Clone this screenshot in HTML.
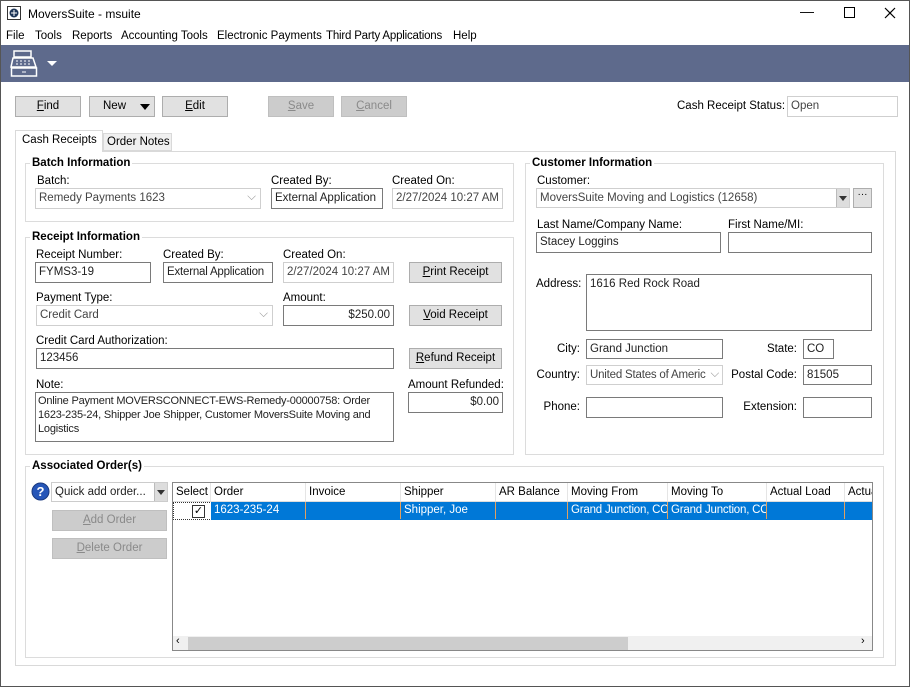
<!DOCTYPE html>
<html><head><meta charset="utf-8"><style>
*{box-sizing:border-box;margin:0;padding:0}
body{width:910px;height:687px;background:#fff;font-family:"Liberation Sans",sans-serif;font-size:11.5px;color:#000;position:relative;overflow:hidden}
.a{position:absolute;white-space:nowrap}
.i{position:absolute;border:1px solid #7a7a7a;background:#fff;padding:2px 3px;line-height:14px;white-space:nowrap;overflow:hidden;color:#222}
.ro{border-color:#cfcfcf;color:#444}
.b{position:absolute;background:#e1e1e1;border:1px solid #adadad;text-align:center;line-height:19px}
.dis{color:#8a8a8a;background:#cccccc;border-color:#bfbfbf}
.g{position:absolute;border:1px solid #dcdcdc}
.gt{position:absolute;background:#fff;font-weight:bold;padding:0 2px;line-height:12px}
.r{text-align:right}
.h{position:absolute;top:0;height:18px;border-right:1px solid #e5e5e5;padding-left:3px;line-height:18px}
.c{position:absolute;top:0;height:17px;border-right:1px solid #e0a060;padding-left:3px;line-height:17px;color:#fff}
u{text-decoration:underline}
</style></head><body>
<div style="position:absolute;left:0;top:0;width:910px;height:687px;border:1px solid #555"></div>
<svg class="a" style="left:7px;top:6px" width="14" height="14"><rect x="0.5" y="0.5" width="13" height="13" fill="#fff" stroke="#333"/><circle cx="7" cy="7" r="4.5" fill="#1d3557"/><path d="M4 7h6M7 4v6" stroke="#fff" stroke-width="1"/></svg>
<div class="a" style="left:28px;top:7px;font-size:12px">MoversSuite - msuite</div>
<div class="a" style="left:800px;top:3px;font-size:14px">—</div>
<div class="a" style="left:844px;top:7px;width:11px;height:11px;border:1px solid #000"></div>
<svg class="a" style="left:884px;top:7px" width="12" height="12"><path d="M1 1L11 11M11 1L1 11" stroke="#000" stroke-width="1.2"/></svg>
<div class="a" style="top:30px;left:6px">File</div>
<div class="a" style="top:30px;left:35px">Tools</div>
<div class="a" style="top:30px;left:72px">Reports</div>
<div class="a" style="top:30px;left:121px">Accounting Tools</div>
<div class="a" style="top:30px;left:217px">Electronic Payments</div>
<div class="a" style="top:30px;left:326px;letter-spacing:-0.2px">Third Party Applications</div>
<div class="a" style="top:30px;left:453px">Help</div>
<div class="a" style="left:1px;top:45px;width:908px;height:37px;background:#5e6a8c"></div>
<svg class="a" style="left:10px;top:49px" width="52" height="30"><rect x="4" y="2" width="17" height="6" fill="none" stroke="#fff" stroke-width="1.5"/><path d="M3 9h20l3 9H1z" fill="none" stroke="#fff" stroke-width="1.5"/><rect x="1.5" y="19" width="25" height="8" fill="none" stroke="#fff" stroke-width="1.5"/><path d="M6 12h2M10 12h2M14 12h2M18 12h2M6 15h2M10 15h2M14 15h2M18 15h2" stroke="#fff"/><path d="M12 23h4" stroke="#fff"/><path d="M37 12h10l-5 5z" fill="#fff"/></svg>
<div class="b" style="left:15px;top:96px;width:66px;height:21px"><u>F</u>ind</div>
<div class="b" style="left:89px;top:96px;width:66px;height:21px;text-align:left;padding-left:13px">New<span style="position:absolute;left:50px;top:7px;border-left:5px solid transparent;border-right:5px solid transparent;border-top:6px solid #000"></span></div>
<div class="b" style="left:162px;top:96px;width:66px;height:21px"><u>E</u>dit</div>
<div class="b dis" style="left:268px;top:96px;width:66px;height:21px"><u>S</u>ave</div>
<div class="b dis" style="left:341px;top:96px;width:66px;height:21px"><u>C</u>ancel</div>
<div class="a" style="left:677px;top:100px">Cash Receipt Status:</div>
<div class="i ro" style="left:787px;top:96px;width:111px;height:21px">Open</div>
<div class="a" style="left:15px;top:151px;width:881px;height:515px;border:1px solid #d9d9d9"></div>
<div class="a" style="left:15px;top:130px;width:88px;height:22px;border:1px solid #d9d9d9;border-bottom:none;background:#fff;padding:3px 0 0 6px">Cash Receipts</div>
<div class="a" style="left:103px;top:133px;width:69px;height:18px;border:1px solid #d9d9d9;background:#f0f0f0;padding:2px 0 0 3px">Order Notes</div>
<div class="g" style="left:25px;top:163px;width:489px;height:59px"></div>
<div class="gt" style="left:30px;top:157px">Batch Information</div>
<div class="a" style="left:37px;top:175px">Batch:</div>
<div class="i ro" style="left:35px;top:188px;width:226px;height:21px">Remedy Payments 1623<span style="position:absolute;right:4px;top:1px;color:#999">⌵</span></div>
<div class="a" style="left:271px;top:175px">Created By:</div>
<div class="i" style="left:271px;top:188px;width:112px;height:21px">External Application</div>
<div class="a" style="left:392px;top:175px">Created On:</div>
<div class="i ro" style="left:392px;top:188px;width:111px;height:21px">2/27/2024 10:27 AM</div>
<div class="g" style="left:25px;top:237px;width:489px;height:218px"></div>
<div class="gt" style="left:30px;top:231px">Receipt Information</div>
<div class="a" style="left:36px;top:249px">Receipt Number:</div>
<div class="i" style="left:35px;top:262px;width:116px;height:21px">FYMS3-19</div>
<div class="a" style="left:163px;top:249px">Created By:</div>
<div class="i" style="left:163px;top:262px;width:110px;height:21px;letter-spacing:-0.2px">External Application</div>
<div class="a" style="left:283px;top:249px">Created On:</div>
<div class="i ro" style="left:283px;top:262px;width:111px;height:21px">2/27/2024 10:27 AM</div>
<div class="b" style="left:409px;top:262px;width:93px;height:21px"><u>P</u>rint Receipt</div>
<div class="a" style="left:36px;top:292px">Payment Type:</div>
<div class="i ro" style="left:36px;top:305px;width:237px;height:21px">Credit Card<span style="position:absolute;right:4px;top:1px;color:#999">⌵</span></div>
<div class="a" style="left:283px;top:292px">Amount:</div>
<div class="i r" style="left:283px;top:305px;width:111px;height:21px">$250.00</div>
<div class="b" style="left:409px;top:305px;width:93px;height:21px"><u>V</u>oid Receipt</div>
<div class="a" style="left:36px;top:335px">Credit Card Authorization:</div>
<div class="i" style="left:36px;top:348px;width:358px;height:21px">123456</div>
<div class="b" style="left:409px;top:348px;width:93px;height:21px"><u>R</u>efund Receipt</div>
<div class="a" style="left:36px;top:379px">Note:</div>
<div class="i" style="left:35px;top:392px;width:359px;height:50px;white-space:normal;line-height:14px;padding:1px 2px;font-size:11px;letter-spacing:-0.2px">Online Payment MOVERSCONNECT-EWS-Remedy-00000758: Order 1623-235-24, Shipper Joe Shipper, Customer MoversSuite Moving and Logistics</div>
<div class="a" style="left:408px;top:379px">Amount Refunded:</div>
<div class="i r" style="left:408px;top:392px;width:95px;height:21px">$0.00</div>
<div class="g" style="left:525px;top:163px;width:359px;height:292px"></div>
<div class="gt" style="left:530px;top:157px">Customer Information</div>
<div class="a" style="left:537px;top:175px">Customer:</div>
<div class="i ro" style="left:536px;top:188px;width:314px;height:20px">MoversSuite Moving and Logistics (12658)<span style="position:absolute;right:0;top:0;width:13px;height:18px;background:#ddd;border-left:1px solid #bbb"><span style="position:absolute;left:2px;top:7px;border-left:4px solid transparent;border-right:4px solid transparent;border-top:5px solid #333"></span></span></div>
<div class="b" style="left:853px;top:188px;width:19px;height:20px;line-height:12px;font-size:10px">···</div>
<div class="a" style="left:537px;top:219px">Last Name/Company Name:</div>
<div class="i" style="left:536px;top:232px;width:185px;height:21px">Stacey Loggins</div>
<div class="a" style="left:728px;top:219px">First Name/MI:</div>
<div class="i" style="left:728px;top:232px;width:144px;height:21px"></div>
<div class="a" style="left:536px;top:278px">Address:</div>
<div class="i" style="left:586px;top:274px;width:286px;height:57px">1616 Red Rock Road</div>
<div class="a r" style="left:540px;top:343px;width:40px">City:</div>
<div class="i" style="left:586px;top:339px;width:137px;height:20px">Grand Junction</div>
<div class="a r" style="left:740px;top:343px;width:57px">State:</div>
<div class="i" style="left:803px;top:339px;width:31px;height:20px">CO</div>
<div class="a r" style="left:530px;top:369px;width:50px">Country:</div>
<div class="i ro" style="left:586px;top:365px;width:137px;height:20px;letter-spacing:-0.2px">United States of Americ<span style="position:absolute;right:3px;top:1px;color:#999;background:#fff">⌵</span></div>
<div class="a r" style="left:720px;top:369px;width:77px">Postal Code:</div>
<div class="i" style="left:803px;top:365px;width:69px;height:20px">81505</div>
<div class="a r" style="left:530px;top:401px;width:50px">Phone:</div>
<div class="i" style="left:586px;top:397px;width:137px;height:21px"></div>
<div class="a r" style="left:720px;top:401px;width:77px">Extension:</div>
<div class="i" style="left:803px;top:397px;width:69px;height:21px"></div>
<div class="g" style="left:25px;top:466px;width:859px;height:192px"></div>
<div class="gt" style="left:30px;top:460px">Associated Order(s)</div>
<svg class="a" style="left:31px;top:482px" width="19" height="19"><circle cx="9.5" cy="9.5" r="8.5" fill="#2656b8" stroke="#1a3a80"/><text x="9.5" y="14" text-anchor="middle" fill="#fff" font-family="Liberation Sans" font-weight="bold" font-size="13">?</text></svg>
<div class="i" style="left:51px;top:482px;width:117px;height:20px;border-color:#ccc">Quick add order...<span style="position:absolute;right:0;top:0;width:13px;height:18px;background:#ddd;border-left:1px solid #bbb"><span style="position:absolute;left:2px;top:7px;border-left:4px solid transparent;border-right:4px solid transparent;border-top:5px solid #333"></span></span></div>
<div class="b dis" style="left:52px;top:510px;width:115px;height:21px"><u>A</u>dd Order</div>
<div class="b dis" style="left:52px;top:538px;width:115px;height:21px"><u>D</u>elete Order</div>
<div class="a" style="left:172px;top:482px;width:701px;height:169px;border:1px solid #888;overflow:hidden;background:#fff">
 <div class="a" style="left:0;top:0;width:700px;height:19px;border-bottom:1px solid #ddd"></div>
 <div class="h" style="left:0;width:38px">Select</div>
 <div class="h" style="left:38px;width:95px">Order</div>
 <div class="h" style="left:133px;width:95px">Invoice</div>
 <div class="h" style="left:228px;width:95px">Shipper</div>
 <div class="h" style="left:323px;width:72px">AR Balance</div>
 <div class="h" style="left:395px;width:100px">Moving From</div>
 <div class="h" style="left:495px;width:99px">Moving To</div>
 <div class="h" style="left:594px;width:78px">Actual Load</div>
 <div class="h" style="left:672px;width:40px">Actua</div>
 <div class="a" style="left:0;top:19px;width:39px;height:18px;border:1px dotted #333"><div class="a" style="left:18px;top:2px;width:13px;height:13px;border:1px solid #333;font-size:11px;line-height:11px;text-align:center">✓</div></div>
 <div class="a" style="left:38px;top:19px;width:662px;height:18px;background:#0078d7">
  <div class="c" style="left:0;width:95px">1623-235-24</div>
  <div class="c" style="left:95px;width:95px"></div>
  <div class="c" style="left:190px;width:95px">Shipper, Joe</div>
  <div class="c" style="left:285px;width:72px"></div>
  <div class="c" style="left:357px;width:100px;overflow:hidden;letter-spacing:-0.2px">Grand Junction, CO</div>
  <div class="c" style="left:457px;width:99px;overflow:hidden;letter-spacing:-0.2px">Grand Junction, CO</div>
  <div class="c" style="left:556px;width:78px"></div>
 </div>
 <div class="a" style="left:0;top:153px;width:700px;height:15px;background:#f0f0f0"></div>
 <div class="a" style="left:15px;top:154px;width:440px;height:13px;background:#cdcdcd"></div>
 <div class="a" style="left:3px;top:152px;font-size:11px">‹</div>
 <div class="a" style="left:688px;top:152px;font-size:11px">›</div>
</div>
</body></html>
